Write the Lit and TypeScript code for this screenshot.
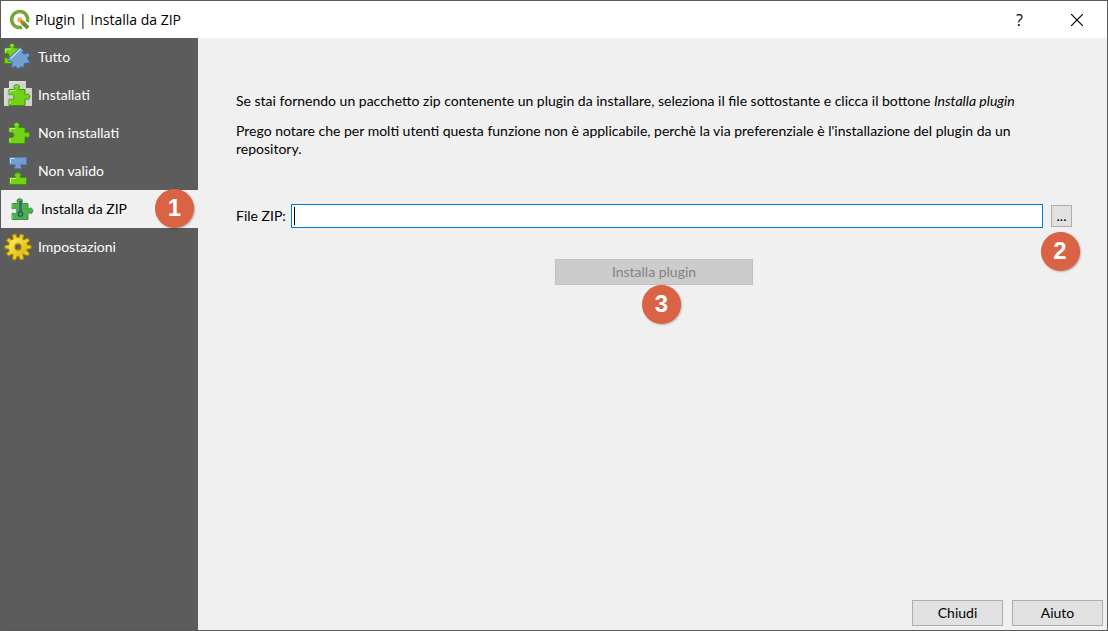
import { LitElement, html, css, svg } from "lit";
import { customElement, state } from "lit/decorators.js";
import { classMap } from "lit/directives/class-map.js";

const PIECE =
  "M5 8.500H10.500C11 7.500 10 7 10 5.800C10 3 15.500 3 15.500 5.800C15.500 7 14.500 7.500 15 8.500H21V13.500C22 14.500 22.500 13 23.500 13C26.500 13 26.500 18.500 23.500 18.500C22.500 18.500 22 17 21 18V24.500H5V18.500C6 17.500 7 19 8 18.500C10.500 18 10.500 14 8 13.500C7 13 6 14.500 5 13.500Z";

const icons = {
  all: svg`
    <path d="M.5 5H6C7 4 5.500 3.500 5.500 2.500C5.500 .2 10.500 .2 10.500 2.500C10.500 3.500 9 4 10 5H15.500V20.500H.5V15C2 14 3 16 4.500 14.500C6 12 4 9.500 2.500 10.500C1.500 11.500 1 11 .5 10.500Z" fill="#73d216" stroke="#3f9409"/>
    <path d="M1.500 9V6H7M6.500 3C7 1.800 8 1.600 9 1.800" fill="none" stroke="#c9f5a0"/>
    <path d="M5 15L16.500 4.500L19.500 7.500C17.500 9.500 19.500 12 22 10.500C24 9 26.500 11.500 25 13.500C24 14.500 23 15 24 16.500L26.500 19.500L20.500 20.500L19.500 25L16.500 23.500C15.500 26.500 12.500 26 12 23.500L7.500 24.500L8 20C9 18.500 7 18.500 6 18.500C4 18.500 3.500 16.500 5 15Z" fill="#729fcf" stroke="#3f6ca5"/>
    <path d="M6.500 15.500L16.500 6" fill="none" stroke="#c8e0fa" stroke-width="1.300"/>`,
  installed: svg`
    <path d="M5 0H22V7H28V25H0V7H5Z" fill="#d0d2cd"/>
    <path d="M6 7V1H21M1 23V8H6" fill="none" stroke="#e6e7e4"/>
    <path d=${PIECE} fill="#73d216" stroke="#3f9409"/>
    <path d="M6 12.500V9.500H11.500M11 6C11.500 5 12.500 4.800 13.500 5M6 19.500V23" fill="none" stroke="#bff58b"/>`,
  missing: svg`
    <path d=${PIECE} fill="#73d216" stroke="#3f9409"/>
    <path d="M6 12.500V9.500H11.500M11 6C11.500 5 12.500 4.800 13.500 5M6 19.500V23" fill="none" stroke="#bff58b"/>`,
  invalid: svg`
    <path d="M5.500 .5H22.500V7.500H17C16 8.500 17.500 9 17.500 11.500H10.500C10.500 9 12 8.500 11 7.500H5.500Z" fill="#729fcf" stroke="#4f7db5"/>
    <path d="M6.500 6V1.500H11" fill="none" stroke="#c8e0fa"/>
    <path d="M5.500 27.500V20.500H11C12 19.500 10.500 19 10.500 17.800C10.500 15 17 15 17 17.800C17 19 15.500 19.500 16.500 20.500H22.500V27.500Z" fill="#73d216" stroke="#3f9409"/>
    <path d="M6.500 26V21.500H12" fill="none" stroke="#bff58b"/>`,
  zip: svg`
    <path d=${PIECE} fill="#4caf50" stroke="#3d9142"/>
    <path d="M5.500 9V12M5.500 20V24" stroke="#7fce83"/>
    <path d="M13.500 6V17" fill="none" stroke="#2b526b" stroke-width="3" stroke-dasharray="1.200 1"/>
    <path d="M13.500 6V17" stroke="#36617c"/>
    <circle cx="13.500" cy="19" r="2.200" fill="#4caf50" stroke="#2b526b" stroke-width="1.300"/>`,
};

const teeth = [0, 36, 72, 108, 144, 180, 216, 252, 288, 324];
const gear = svg`
  <defs><linearGradient id="gold" x1="0" y1="0" x2="1" y2="1"><stop offset="0" stop-color="#fff36a"/><stop offset="1" stop-color="#dcae00"/></linearGradient></defs>
  <g transform="rotate(18 14 14)">
    ${teeth.map((a) => svg`<path d="M11.500 7L12.500 1H15.500L16.500 7Z" transform="rotate(${a} 14 14)" fill="#f0d416" stroke="#b78e00"/>`)}
    </g>
    <circle cx="14" cy="14" r="9" fill="url(#gold)"/>
  <circle cx="14" cy="14" r="3" fill="#5c5c5c" stroke="#a98200" stroke-width="1.300"/>`;

const SECTIONS = [
  { label: "Tutto", icon: icons.all },
  { label: "Installati", icon: icons.installed },
  { label: "Non installati", icon: icons.missing },
  { label: "Non valido", icon: icons.invalid },
  { label: "Installa da ZIP", icon: icons.zip, step: 1 },
  { label: "Impostazioni", icon: gear },
];

@customElement("app-root")
export class AppRoot extends LitElement {
  @state() private selected = 4;

  static styles = css`
    :host {
      display: flex;
      flex-direction: column;
      box-sizing: border-box;
      min-height: 100vh;
      border: 1px solid #5a5a5a;
      background: #f0f0f0;
      color: #000;
      font: 14px/18px Lato, "Noto Sans", sans-serif;
    }
    * { box-sizing: border-box; }
    button, input { font: inherit; color: inherit; margin: 0; padding: 0; border-radius: 0; }
    .titlebar {
      display: flex;
      align-items: center;
      height: 37px;
      padding: 0 2px 0 8px;
      background: #fff;
      font: 14px/20px "Open Sans", sans-serif;
    }
    .logo { width: 22px; height: 22px; margin-right: 4px; }
    h1 { flex: 1; margin: 0; font: inherit; }
    .caption {
      display: grid;
      place-items: center;
      width: 57px;
      height: 36px;
      border: 0;
      background: none;
      font-size: 16px;
    }
    .body { flex: 1; display: flex; }
    nav { width: 197px; background: #5c5c5c; }
    .item {
      position: relative;
      display: flex;
      align-items: center;
      gap: 6px;
      width: 100%;
      height: 38px;
      padding-left: 3px;
      border: 0;
      background: none;
      color: #fff;
      text-align: left;
    }
    .item.on { background: #f0f0f0; color: #000; padding-left: 6px; }
    .item svg { width: 28px; height: 28px; flex: none; }
    .badge {
      position: absolute;
      display: grid;
      place-items: center;
      width: 39px;
      height: 39px;
      border-radius: 50%;
      background: #d96344;
      color: #fff;
      box-shadow: 1px 1px 2px rgba(0, 0, 0, 0.25);
      font: bold 24px/36px "Liberation Sans", sans-serif;
      padding-bottom: 2px;
      pointer-events: none;
      z-index: 1;
    }
    .item .badge { right: 4px; top: -1px; }
    .browse .badge { left: 50%; top: 100%; margin: 5px 0 0 -21px; }
    .install .badge { left: 50%; top: 100%; margin-left: -12px; }
    .page { flex: 1; display: flex; flex-direction: column; min-width: 0; }
    .content { flex: 1; padding: 54px 35px 0 38px; }
    p { margin: 0 0 12px; }
    .file { display: flex; align-items: center; gap: 5px; margin-top: 46px; }
    .field { position: relative; flex: 1; display: flex; }
    .field input {
      width: 100%;
      height: 24px;
      padding: 0 4px;
      border: 1px solid #0078d7;
      background: #fff;
      outline: none;
    }
    .caret { position: absolute; left: 3px; top: 3px; bottom: 3px; width: 1px; background: #000; }
    .browse { position: relative; display: flex; margin-left: 3px; }
    .push { height: 26px; border: 1px solid #adadad; background: #e1e1e1; }
    .browse .push { width: 21px; height: 22px; }
    .install { position: relative; width: 198px; margin: 31px auto 0; }
    .install .push { display: block; width: 100%; }
    .push:disabled { border-color: #bfbfbf; background: #ccc; color: #838383; }
    footer { display: flex; justify-content: flex-end; gap: 9px; padding: 4px; }
    footer .push { width: 91px; }
  `;

  render() {
    return html`
      <header class="titlebar">
        <svg class="logo" viewBox="0 0 22 22" aria-hidden="true">
          <path d="M18.300 13A8 8 0 1 0 13 18.200" fill="none" stroke="#75a63a" stroke-width="3.500"/>
          <path d="M13 13L19 19" stroke="#589632" stroke-width="4"/>
          <path d="M11 11L14 14" stroke="#ee7913" stroke-width="3.500"/>
          <path d="M8.500 8.500H13L11 13H8.500Z" fill="#f3ad55"/>
        </svg>
        <h1>Plugin | Installa da ZIP</h1>
        <button class="caption">?</button>
        <button class="caption" aria-label="Chiudi finestra">
          <svg width="12" height="12" viewBox="0 0 12 12"><path d="M0 0L12 12M12 0L0 12" stroke="#000" stroke-width="1.200"/></svg>
        </button>
      </header>
      <div class="body">
        <nav>
          ${SECTIONS.map(
            (s, i) => html`<button class=${classMap({ item: true, on: i === this.selected })} @click=${() => (this.selected = i)}>
              <svg viewBox="0 0 28 28" aria-hidden="true">${s.icon}</svg>
              <span>${s.label}</span>
              ${s.step ? html`<span class="badge">${s.step}</span>` : ""}
            </button>`
          )}
        </nav>
        <main class="page">
          <div class="content">
            <p>Se stai fornendo un pacchetto zip contenente un plugin da installare, seleziona il file sottostante e clicca il bottone <em>Installa plugin</em></p>
            <p>Prego notare che per molti utenti questa funzione non è applicabile, perchè la via preferenziale è l'installazione del plugin da un repository.</p>
            <div class="file">
              <label for="zip">File ZIP:</label>
              <div class="field"><input id="zip" type="text" /><span class="caret"></span></div>
              <div class="browse"><button class="push">...</button><span class="badge">2</span></div>
            </div>
            <div class="install"><button class="push" disabled>Installa plugin</button><span class="badge">3</span></div>
          </div>
          <footer><button class="push">Chiudi</button><button class="push">Aiuto</button></footer>
        </main>
      </div>
    `;
  }
}
